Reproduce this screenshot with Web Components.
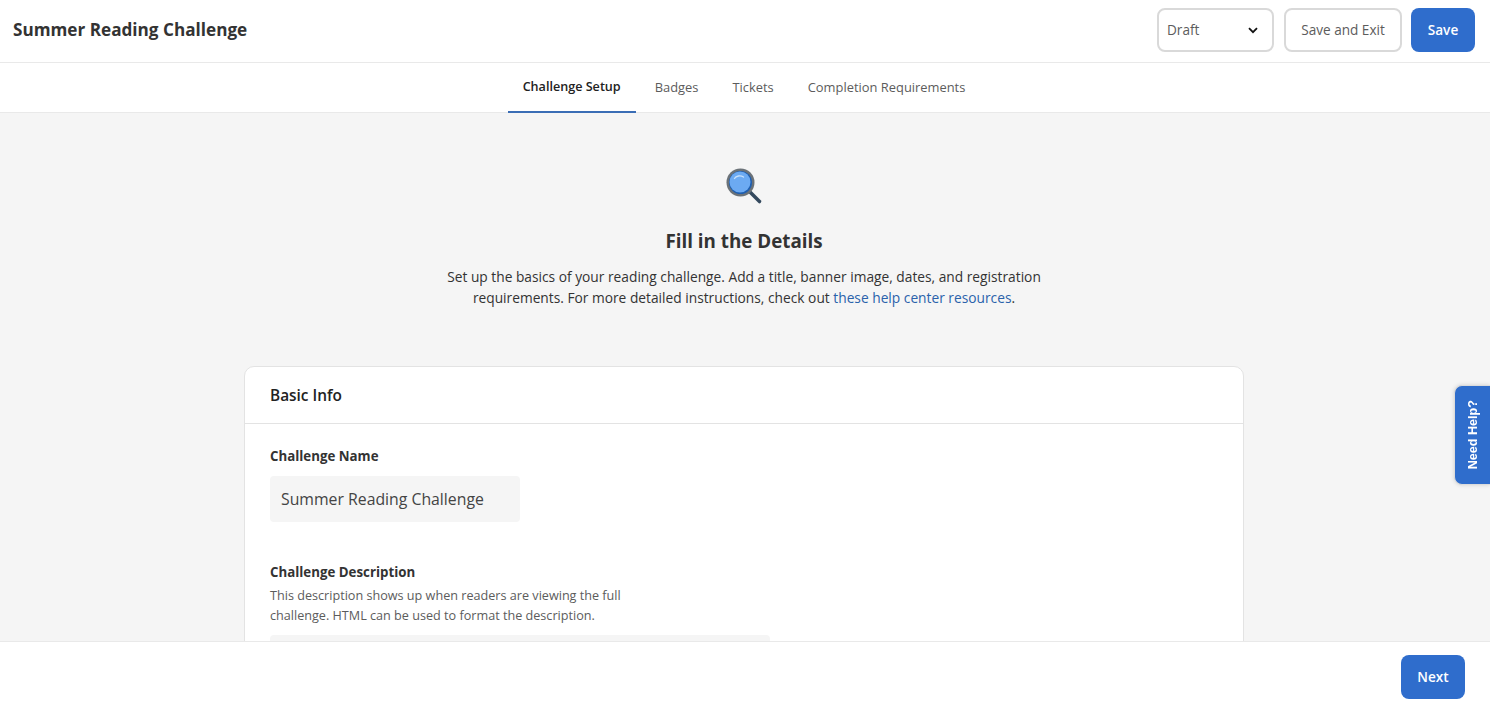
<!DOCTYPE html>
<html>
<head>
    <title>Summer Reading Challenge</title>
    <style>
        html, body {
            height: 100%;
            margin: 0;
            overflow: hidden;
        }
        body {
            font-family: "Open Sans", "Noto Sans", sans-serif;
            color: #333;
        }
    </style>
</head>
<body>
    <challenge-editor>
        <editor-header slot="header" title="Summer Reading Challenge"></editor-header>
        <editor-tabs slot="tabs"></editor-tabs>
        <intro-block slot="main"></intro-block>
        <info-card slot="main"></info-card>
        <editor-footer slot="footer"></editor-footer>
    </challenge-editor>
    <help-tab></help-tab>

    <script>
        customElements.define('challenge-editor', class extends HTMLElement {
            constructor() {
                super();
                this.attachShadow({ mode: 'open' }).innerHTML = `
                <style>
                    :host { display: flex; flex-direction: column; height: 708px; background: #f5f5f5; }
                    .main { flex: 1; min-height: 0; overflow: hidden; display: flex; flex-direction: column; align-items: center; padding-right: 2px; }
                </style>
                <slot name="header"></slot>
                <slot name="tabs"></slot>
                <div class="main"><slot name="main"></slot></div>
                <slot name="footer"></slot>`;
            }
        });

        customElements.define('editor-header', class extends HTMLElement {
            constructor() {
                super();
                this.attachShadow({ mode: 'open' }).innerHTML = `
                <style>
                    :host { display: flex; align-items: center; justify-content: space-between; height: 60px; padding: 0 15px 2px 13px; background: #fff; border-bottom: 1px solid #e9e9e9; flex: none; }
                    h1 { margin: 0 0 1px; font-size: 17.15px; font-weight: 700; color: #333; }
                    .actions { display: flex; gap: 10px; align-items: center; }
                    .select, .btn { box-sizing: border-box; height: 44px; padding-bottom: 2px; border-radius: 8px; font-size: 13.6px; display: flex; align-items: center; }
                    .select { width: 117px; border: 2px solid #d9d9d9; color: #5c5c5c; padding-left: 8px; padding-right: 14px; justify-content: space-between; background: #fff; }
                    .select svg { margin-top: 3px; }
                    .btn { justify-content: center; font-weight: 500; }
                    .outline { width: 118px; margin-right: -1px; border: 2px solid #d9d9d9; color: #5c5c5c; background: #fff; }
                    .primary { width: 64px; background: #2f6dcc; color: #fff; font-weight: 600; }
                    svg { display: block; }
                </style>
                <h1>${this.getAttribute('title')}</h1>
                <div class="actions">
                    <div class="select">Draft
                        <svg width="10" height="7" viewBox="0 0 10 7" fill="none"><path d="M1 1.2 5 5.2 9 1.2" stroke="#111" stroke-width="1.8"/></svg>
                    </div>
                    <div class="btn outline">Save and Exit</div>
                    <div class="btn primary">Save</div>
                </div>`;
            }
        });

        customElements.define('editor-tabs', class extends HTMLElement {
            constructor() {
                super();
                this.attachShadow({ mode: 'open' }).innerHTML = `
                <style>
                    :host { display: flex; justify-content: center; height: 49px; padding-right: 2px; background: #fff; border-bottom: 1px solid #e9e9e9; flex: none; }
                    .tab { display: flex; align-items: center; padding: 0 15px 1px; margin-right: 4px; font-size: 12.9px; font-weight: 500; color: #5c5c5c; margin-bottom: -1px; border-bottom: 2px solid transparent; box-sizing: border-box; height: 50px; }
                    .tab:last-child { margin-right: 0; }
                    .active { color: #222; font-size: 12.6px; font-weight: 600; border-bottom-color: #3a6db5; }
                </style>
                <div class="tab active">Challenge Setup</div>
                <div class="tab">Badges</div>
                <div class="tab">Tickets</div>
                <div class="tab">Completion Requirements</div>`;
            }
        });

        customElements.define('intro-block', class extends HTMLElement {
            constructor() {
                super();
                this.attachShadow({ mode: 'open' }).innerHTML = `
                <style>
                    :host { display: flex; flex-direction: column; align-items: center; padding-top: 54px; flex: none; text-align: center; }
                    svg { display: block; }
                    h2 { margin: 23px 0 0; font-size: 18.8px; line-height: 26px; font-weight: 700; color: #333; }
                    p { margin: 12px 0 0; width: 620px; font-size: 13.76px; line-height: 21px; color: #333; }
                    a { color: #2a62ab; text-decoration: none; }
                </style>
                <svg width="38" height="38" viewBox="0 0 38 38">
                    <path d="M24 24 34.5 34.5" stroke="#34495e" stroke-width="3.6" stroke-linecap="round"/>
                    <circle cx="15.5" cy="15.5" r="14" fill="#6b7278"/>
                    <circle cx="15.5" cy="15.5" r="11.5" fill="#1f5fb0"/>
                    <circle cx="15" cy="15" r="10.5" fill="#6caaf2"/>
                    <path d="M9.5 11.5C11 8.8 15.5 8 18.5 10" stroke="#c6e0fb" stroke-width="1.4" fill="none" stroke-linecap="round"/>
                </svg>
                <h2>Fill in the Details</h2>
                <p>Set up the basics of your reading challenge. Add a title, banner image, dates, and registration requirements. For more detailed instructions, check out <a href="#">these help center resources</a>.</p>`;
            }
        });

        customElements.define('info-card', class extends HTMLElement {
            constructor() {
                super();
                this.attachShadow({ mode: 'open' }).innerHTML = `
                <style>
                    :host { display: block; box-sizing: border-box; width: 1000px; margin-top: 58px; background: #fff; border: 1px solid #e3e3e3; border-radius: 10px; flex: none; }
                    header { height: 56px; display: flex; align-items: center; padding: 0 25px; border-bottom: 1px solid #e3e3e3; font-size: 15.4px; font-weight: 600; color: #222; }
                    .body { padding: 23px 25px 0; }
                    label { display: block; font-size: 13.3px; line-height: 18px; font-weight: 700; color: #333; }
                    .input { box-sizing: border-box; width: 250px; height: 46px; margin-top: 11px; padding: 0 11px; display: flex; align-items: center; background: #f5f5f5; border-radius: 4px; font-size: 15.8px; color: #444; }
                    .field + .field { margin-top: 41px; }
                    .hint { margin: 5px 0 0; width: 380px; font-size: 12.63px; line-height: 20px; color: #5c5c5c; }
                    .area { width: 500px; height: 120px; margin-top: 9px; background: #f5f5f5; border-radius: 4px; }
                </style>
                <header>Basic Info</header>
                <div class="body">
                    <div class="field">
                        <label>Challenge Name</label>
                        <div class="input">Summer Reading Challenge</div>
                    </div>
                    <div class="field">
                        <label>Challenge Description</label>
                        <p class="hint">This description shows up when readers are viewing the full challenge. HTML can be used to format the description.</p>
                        <div class="area"></div>
                    </div>
                </div>`;
            }
        });

        customElements.define('editor-footer', class extends HTMLElement {
            constructor() {
                super();
                this.attachShadow({ mode: 'open' }).innerHTML = `
                <style>
                    :host { display: flex; justify-content: flex-end; align-items: center; height: 62px; padding: 4px 25px 0 0; background: #fff; border-top: 1px solid #e9e9e9; flex: none; position: relative; }
                    .btn { box-sizing: border-box; width: 64px; height: 44px; padding-bottom: 2px; border-radius: 8px; background: #2f6dcc; color: #fff; font-size: 13.6px; font-weight: 600; display: flex; align-items: center; justify-content: center; }
                </style>
                <div class="btn">Next</div>`;
            }
        });

        // Floating tab on the right edge, sits over the page
        customElements.define('help-tab', class extends HTMLElement {
            constructor() {
                super();
                this.attachShadow({ mode: 'open' }).innerHTML = `
                <style>
                    :host { position: fixed; right: 0; top: 385px; width: 36px; height: 100px; box-sizing: border-box; background: #2f6dcc; border: 1px solid #dcdcdc; border-right: 0; border-radius: 8px 0 0 8px; box-shadow: 0 0 4px rgba(0,0,0,.15); display: flex; align-items: center; justify-content: center; }
                    span { writing-mode: vertical-rl; transform: rotate(180deg); color: #fff; font: 700 12.6px "Liberation Sans", Arial, sans-serif; }
                </style>
                <span>Need Help?</span>`;
            }
        });
    </script>
</body>
</html>
